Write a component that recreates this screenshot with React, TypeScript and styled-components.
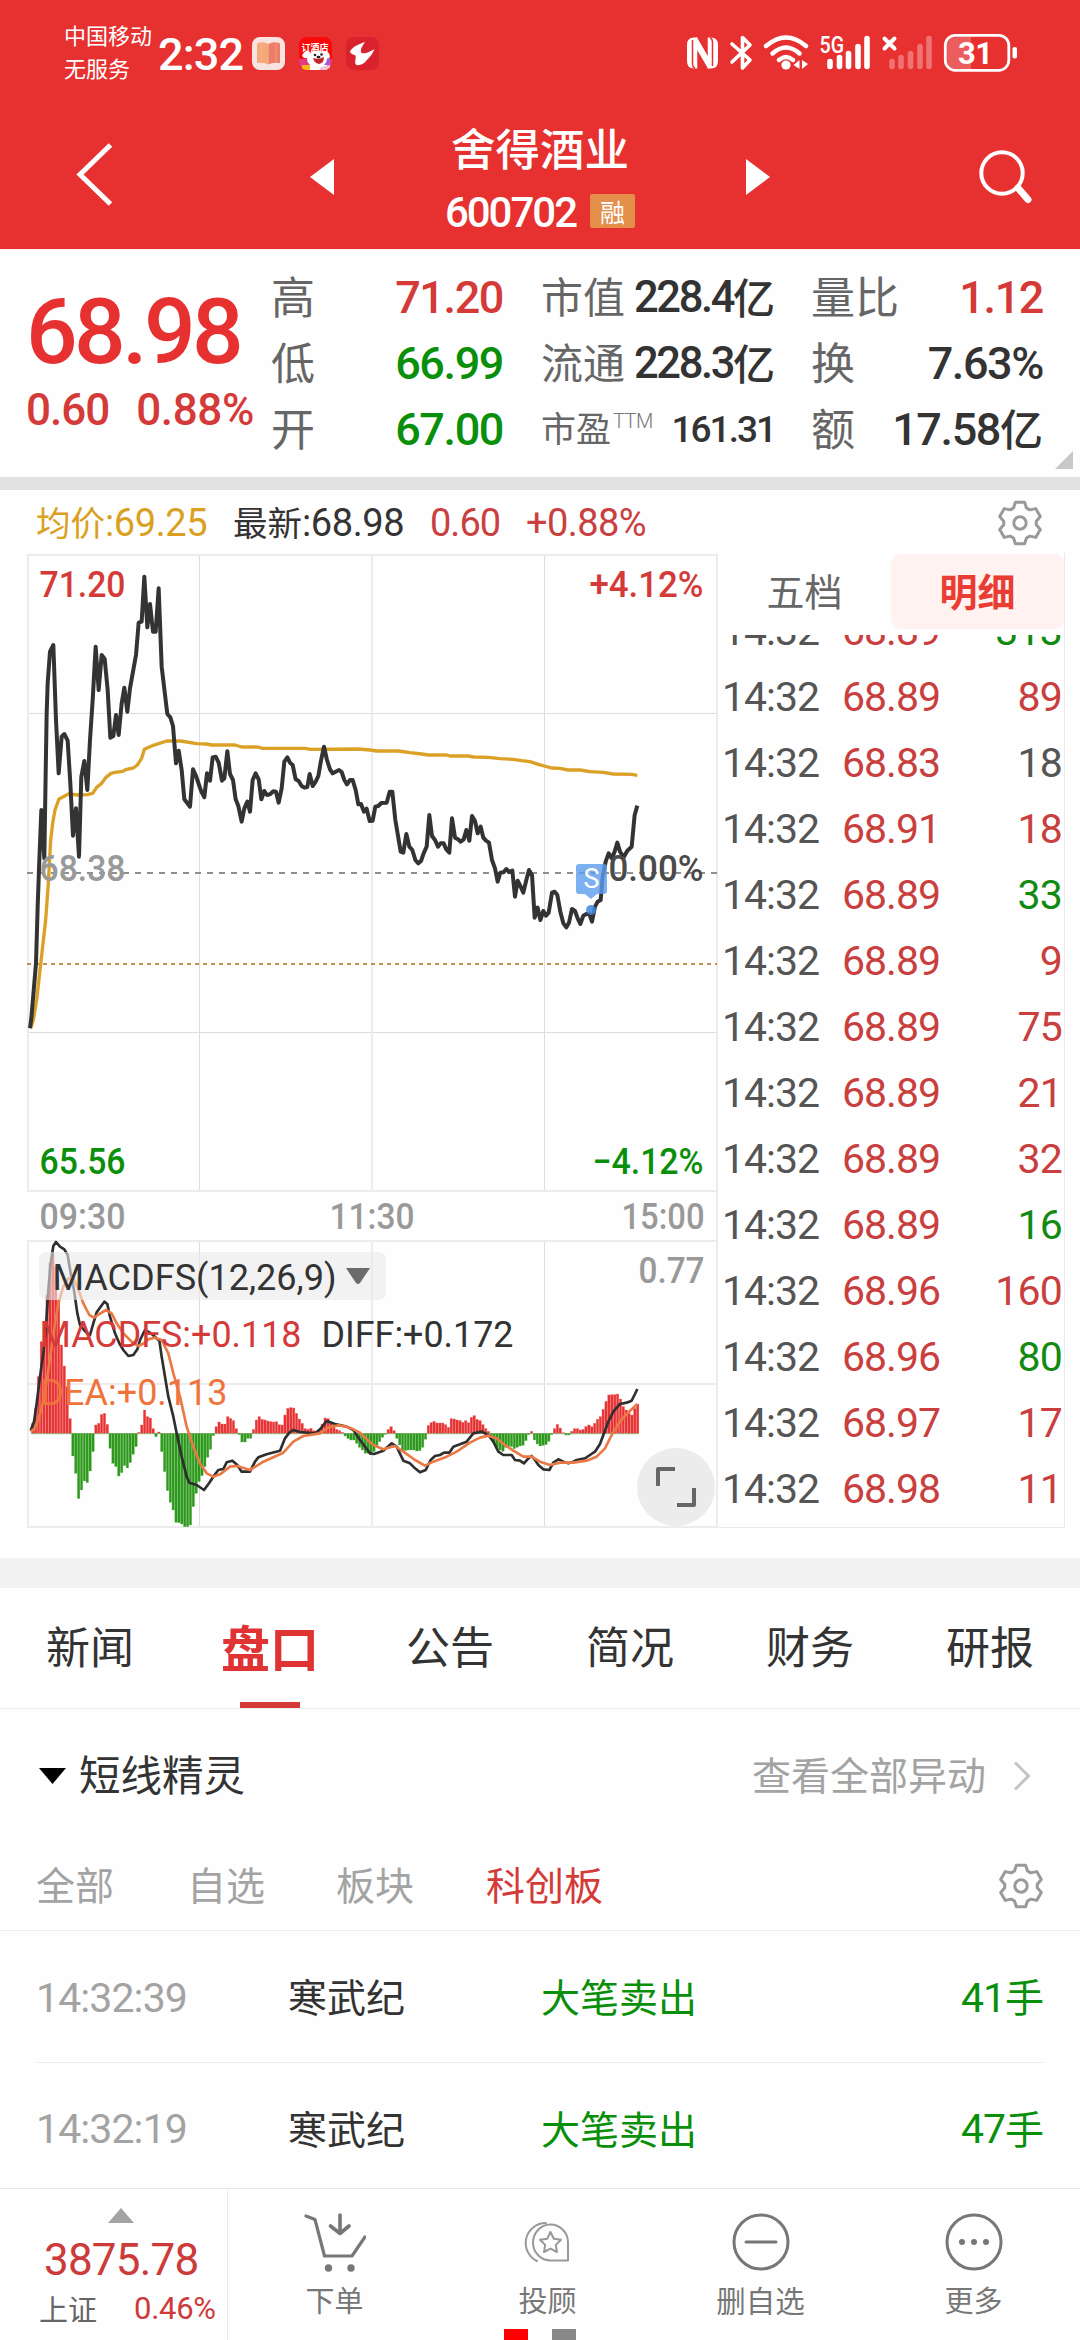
import React from "react";
import styled, { createGlobalStyle } from "styled-components";

const RED = "#d43a38";
const GREEN = "#0a8f0a";
const INK = "#333333";
const NUM_FONT = `Roboto, "Noto Sans CJK SC", sans-serif`;
const CJK_FONT = `"Noto Sans CJK SC", Roboto, sans-serif`;

const GlobalStyle = createGlobalStyle`
  * { box-sizing: border-box; }
  html, body { margin: 0; padding: 0; background: #ffffff; }
  body { width: 1080px; overflow: hidden; font-family: ${CJK_FONT}; }
  svg { display: block; }
`;

const Screen = styled.div`
  width: 1080px;
  height: 2340px;
  display: flex;
  flex-direction: column;
  background: #fefefe;
  overflow: hidden;
  position: relative;
`;

/* ---------- text primitives ---------- */

const Num = styled.span<{ $size: number; $color?: string; $weight?: number; $ls?: number }>`
  font-family: ${NUM_FONT};
  font-size: ${(p) => p.$size}px;
  line-height: 1;
  color: ${(p) => p.$color ?? INK};
  font-weight: ${(p) => p.$weight ?? 400};
  letter-spacing: ${(p) => p.$ls ?? -1}px;
  white-space: pre;
`;

const Cjk = styled.span<{ $size: number; $color?: string; $weight?: number }>`
  font-family: ${CJK_FONT};
  font-size: ${(p) => p.$size}px;
  line-height: 1;
  color: ${(p) => p.$color ?? INK};
  font-weight: ${(p) => p.$weight ?? 400};
  white-space: nowrap;
`;

/* ---------- header ---------- */

const Header = styled.header`
  height: 249px;
  flex: none;
  background: #e63130;
  display: flex;
  flex-direction: column;
`;

const StatusBar = styled.div`
  height: 106px;
  padding: 0 61px 0 64px;
  display: flex;
  align-items: center;
  justify-content: space-between;
`;

const StatusGroup = styled.div`
  display: flex;
  align-items: center;
`;

const Carrier = styled.div`
  width: 94px;
  display: flex;
  flex-direction: column;
  gap: 11px;
  padding-bottom: 5px;
`;

const Clock = styled.div`
  width: 94px;
  padding-top: 2px;
  display: flex;
`;

const AppIcons = styled.div`
  display: flex;
  gap: 14px;
`;

const NavBar = styled.div`
  height: 143px;
  display: grid;
  grid-template-columns: 300px 480px 300px;
`;

const NavSide = styled.div`
  display: flex;
  align-items: flex-start;
`;

const BackIcon = styled.svg`
  margin: 34px 0 0 72px;
`;

const SearchIcon = styled.svg`
  margin: 40px 0 0 196px;
`;

const NavCenter = styled.div`
  display: flex;
  justify-content: space-between;
  padding: 0 10px;
`;

const Arrow = styled.svg`
  margin-top: 53px;
`;

const TitleBlock = styled.div`
  display: flex;
  flex-direction: column;
  align-items: center;
  padding-top: 19px;
`;

const CodeRow = styled.div`
  display: flex;
  align-items: center;
  height: 40px;
  margin-top: 23px;
  gap: 14px;
`;

const Badge = styled.span`
  width: 45px;
  height: 34px;
  margin-top: -3px;
  border-radius: 2px;
  background: #e38e49;
  display: flex;
  align-items: center;
  justify-content: center;
`;

/* ---------- quote ---------- */

const Quote = styled.section`
  position: relative;
  height: 228px;
  flex: none;
  border-top: 1px solid #fdeeee;
  display: grid;
  grid-template-columns: 245px 270px 270px 232px;
  padding: 15px 0 0 26px;
`;

const PriceBlock = styled.div`
  display: flex;
  flex-direction: column;
`;

const BigPrice = styled.div`
  margin-top: 22px;
  height: 92px;
  display: flex;
`;

const ChangeRow = styled.div`
  display: flex;
  margin-top: 9px;
  gap: 27px;
`;

const StatColumn = styled.div<{ $width: number }>`
  width: ${(p) => p.$width}px;
  display: flex;
  flex-direction: column;
`;

const StatRow = styled.div`
  height: 65.7px;
  display: flex;
  align-items: center;
  justify-content: space-between;
`;

const StatLabel = styled.span`
  display: flex;
  align-items: center;
  padding-bottom: 5px;
`;

const StatValue = styled.span`
  display: flex;
  align-items: center;
`;

const UnitWrap = styled.span`
  display: flex;
  padding-bottom: 3px;
`;

const Sup = styled.span`
  font-family: ${NUM_FONT};
  font-size: 20px;
  line-height: 20px;
  color: #777;
  font-weight: 300;
  letter-spacing: -0.5px;
  margin: -12px 0 0 2px;
`;

const Corner = styled.svg`
  position: absolute;
  right: 7px;
  bottom: 8px;
`;

const Divider = styled.div<{ $h: number; $color: string }>`
  height: ${(p) => p.$h}px;
  flex: none;
  background: ${(p) => p.$color};
`;

/* ---------- info line ---------- */

const InfoLine = styled.div`
  height: 63px;
  flex: none;
  display: flex;
  align-items: center;
  padding: 3px 37px 0 36px;
`;

const InfoItem = styled.span<{ $width: number }>`
  width: ${(p) => p.$width}px;
  display: flex;
  align-items: center;
`;

const InfoCjk = styled.span`
  display: flex;
  padding-bottom: 4px;
`;

const Spacer = styled.span`
  flex: 1;
`;

/* ---------- chart + ticks ---------- */

const MarketArea = styled.section`
  height: 1005px;
  flex: none;
  display: flex;
`;

const ChartPane = styled.div`
  position: relative;
  width: 718px;
  height: 975px;
`;

const ExpandButton = styled.button`
  position: absolute;
  left: 637px;
  top: 895px;
  width: 78px;
  height: 78px;
  padding: 0;
  border: 0;
  border-radius: 50%;
  background: #ececec;
  display: flex;
  align-items: center;
  justify-content: center;
`;

const TickPane = styled.div`
  width: 347px;
  height: 975px;
  border-right: 1px solid #e9e9e9;
  border-bottom: 1px solid #e9e9e9;
  display: flex;
  flex-direction: column;
`;

const TickTabs = styled.div`
  height: 76px;
  flex: none;
  display: grid;
  grid-template-columns: 173px 173px;
`;

const TickTab = styled.div<{ $active?: boolean }>`
  height: 75px;
  margin-top: 1px;
  border-radius: 9px;
  background: ${(p) => (p.$active ? "#fff2f1" : "transparent")};
  display: flex;
  align-items: center;
  justify-content: center;
  padding-bottom: 3px;
`;

const TickList = styled.div`
  flex: 1;
  margin-top: 6px;
  overflow: hidden;
  display: flex;
  flex-direction: column;
  justify-content: flex-end;
  padding-bottom: 5px;
`;

const TickRow = styled.div`
  height: 66px;
  flex: none;
  padding: 0 2px 0 4px;
  display: grid;
  grid-template-columns: 120px 110px 1fr;
  align-items: center;
`;

const TickVolume = styled.span`
  text-align: right;
`;

/* ---------- tabs ---------- */

const Tabs = styled.nav`
  height: 121px;
  flex: none;
  border-bottom: 1px solid #ececec;
  display: grid;
  grid-template-columns: repeat(6, 180px);
`;

const Tab = styled.div`
  display: flex;
  flex-direction: column;
  align-items: center;
  justify-content: space-between;
`;

const TabLabel = styled.span`
  height: 114px;
  display: flex;
  align-items: center;
`;

const TabBar = styled.span`
  width: 60px;
  height: 6px;
  background: ${RED};
`;

const SectionHead = styled.div`
  height: 134px;
  flex: none;
  padding: 0 49px 0 39px;
  display: flex;
  align-items: center;
  justify-content: space-between;
`;

const HeadGroup = styled.div<{ $gap: number }>`
  display: flex;
  align-items: center;
  gap: ${(p) => p.$gap}px;
`;

const Lift = styled.span`
  display: flex;
  padding-bottom: 5px;
`;

const Filters = styled.div`
  height: 88px;
  flex: none;
  border-bottom: 1px solid #ececec;
  padding: 0 36px;
  display: flex;
  align-items: flex-start;
`;

const FilterItem = styled.span<{ $width: number }>`
  width: ${(p) => p.$width}px;
  padding-top: 21px;
  display: flex;
`;

const GearWrap = styled.span`
  padding-top: 20px;
`;

const AlertRow = styled.div<{ $h: number; $last?: boolean }>`
  height: ${(p) => p.$h}px;
  flex: none;
  margin: 0 36px;
  padding-top: ${(p) => (p.$last ? 8 : 3)}px;
  display: grid;
  grid-template-columns: 252px 253px 1fr auto;
  align-items: center;
  border-bottom: ${(p) => (p.$last ? "0" : "1px solid #ececec")};
`;

/* ---------- bottom bar ---------- */

const BottomBar = styled.footer`
  height: 153px;
  flex: none;
  border-top: 1px solid #e6e6e6;
  display: grid;
  grid-template-columns: 228px repeat(4, 213px);
  background: #fefefe;
`;

const IndexCell = styled.div`
  border-right: 1px solid #ececec;
  display: flex;
  flex-direction: column;
  padding: 19px 0 0 39px;
`;

const UpArrow = styled.svg`
  margin-left: 69px;
`;

const IndexValue = styled.div`
  margin: 15px 0 0 5px;
  height: 44px;
  display: flex;
`;

const IndexFoot = styled.div`
  margin-top: 10px;
  height: 32px;
  display: flex;
  align-items: center;
  gap: 37px;
`;

const Action = styled.div`
  display: flex;
  flex-direction: column;
  align-items: center;
  padding-top: 22px;
`;

const ActionLabel = styled.span`
  margin-top: 12px;
  display: flex;
`;

const PageDots = styled.div`
  position: absolute;
  left: 504px;
  bottom: 0;
  display: flex;
  gap: 24px;
`;

const PageDot = styled.span<{ $color: string }>`
  width: 24px;
  height: 11px;
  background: ${(p) => p.$color};
`;

/* ---------- icons ---------- */

const gearPath = (() => {
  const tooth = [
    [-6.5, -15],
    [-4.6, -20.8],
    [4.6, -20.8],
    [6.5, -15],
  ];
  const pts: string[] = [];
  for (let i = 0; i < 6; i++) {
    const a = (i * Math.PI) / 3;
    for (const [x, y] of tooth) {
      pts.push(
        `${(23 + x * Math.cos(a) - y * Math.sin(a)).toFixed(2)},${(23 + x * Math.sin(a) + y * Math.cos(a)).toFixed(2)}`
      );
    }
  }
  return `M${pts.join("L")}Z`;
})();

const Gear = () => (
  <svg width="46" height="46" viewBox="0 0 46 46" fill="none" stroke="#999" strokeWidth="3" strokeLinejoin="round">
    <path d={gearPath} />
    <circle cx="23" cy="23" r="6.2" />
  </svg>
);

const BookAppIcon = () => (
  <svg width="33" height="33" viewBox="0 0 33 33">
    <rect width="33" height="33" rx="8" fill="#f8e3e1" />
    <path d="M5 6.5Q11 4 16.500 7V27.500Q13 25 5 26Z" fill="#f5a878" />
    <path d="M28 6.500Q22 4 16.500 7V27.500Q20 25 28 26Z" fill="#ee7d68" />
    <path d="M9 5.500V25.300M24 5.500V25.300" stroke="#f9bd98" strokeWidth="1" opacity=".6" />
  </svg>
);

const HotelBadgeText = styled.text`
  font-family: ${CJK_FONT};
  font-size: 9px;
  font-weight: 700;
  fill: #fff;
`;

const HotelAppIcon = () => (
  <svg width="33" height="33" viewBox="0 0 33 33">
    <defs>
      <clipPath id="hotel">
        <rect width="33" height="33" rx="8" />
      </clipPath>
    </defs>
    <g clipPath="url(#hotel)">
      <rect width="33" height="33" fill="#fb0808" />
      <path d="M0 22H33V33H0Z" fill="#e23a86" />
      <path d="M24 22L31 20V30L25 31Z" fill="#a85bd0" />
      <ellipse cx="18" cy="22" rx="10" ry="8.500" fill="#fff" />
      <path d="M3 19Q6 12 11 15L10 20Q6 23 3 19ZM31 20Q30 13 24 15L25 20Q28 23 31 20Z" fill="#fff" />
      <path d="M8 28H28V33H8Z" fill="#fff" />
      <path d="M14 21Q20 23 25 20Q25 26 20 27Q15 26 14 21Z" fill="#c4262b" />
      <circle cx="16" cy="18" r="1.300" fill="#222" />
      <circle cx="22.500" cy="17.500" r="1.300" fill="#222" />
      <ellipse cx="19.500" cy="20" rx="2" ry="1.300" fill="#222" />
      <path d="M3 28H11V33H3Z" fill="#fdb515" />
      <path d="M22 30L31 28V33H20Z" fill="#f9c2d6" />
      <HotelBadgeText x="2.500" y="14">订酒店</HotelBadgeText>
    </g>
  </svg>
);

const BirdAppIcon = () => (
  <svg width="33" height="33" viewBox="0 0 33 33">
    <rect width="33" height="33" rx="8" fill="#d8232f" />
    <path d="M19 5C13 7 6 10 4 14.500C4 17 8 17.500 9.500 18.500C10.500 21 8 25 10 27.800C13 29 18 27 20.500 23.500C24 20 27 16 28.500 12C25 14 19 17.500 15.500 16C13.500 13 17 8 19 5Z" fill="#fff" />
  </svg>
);

const SignalCluster = styled.svg`
  margin-left: 12px;
`;

const StatusText = styled.text<{ $size: number; $weight: number }>`
  font-family: ${NUM_FONT};
  font-size: ${(p) => p.$size}px;
  font-weight: ${(p) => p.$weight};
  fill: #fff;
`;

/* The whole right-hand signal cluster shares one drawing, in screen x / y. */
const StatusIcons = () => (
  <SignalCluster width="336" height="44" viewBox="684 32 336 44" fill="none" stroke="#fff" strokeLinecap="round" strokeLinejoin="round">
    <path d="M696 38.500H695Q688 38.500 688 46V62Q688 69.500 695 69.500H697V49L709 69.500H712Q719 69.500 719 62V46Q719 38.500 712 38.500H710V59L698 38.500Z" fill="#fff" stroke="none" />
    <path d="M693.500 41V65Q693.500 68 696 69.500M713.500 67V43Q713.500 40 711 38.500" stroke="#e63130" strokeWidth="1.500" strokeLinecap="butt" />
    <path d="M697.500 38.500V69.500M709.500 38.500V69.500" stroke="#fff" strokeWidth="1.500" strokeLinecap="butt" />
    <path d="M701 49L708 60.500" stroke="#fff" strokeWidth="2.500" strokeLinecap="butt" />
    <path d="M733 45L751 61L743.500 69V38.500L751 46L733 63" strokeWidth="3.600" />
    <path d="M767 47Q787 30 807 47M773.500 54.500Q787 42.500 800.500 54.500M780 61Q787 55 794 61" strokeWidth="4.400" />
    <circle cx="787" cy="66" r="4.600" fill="#fff" stroke="none" />
    <path d="M800.500 61V70L794.500 66ZM803 61V70L809 65Z" fill="#fff" stroke="none" />
    <StatusText x="820.500" y="54" $size={23} $weight={500} stroke="none" textLength="24.500" lengthAdjust="spacingAndGlyphs">
      5G
    </StatusText>
    <path d="M831 62.500V67.500M840.500 58.500V67.500M849.500 54.500V67.500M859 47.500V67.500M868 39.500V67.500" strokeWidth="5.600" />
    <path d="M885.500 39.500L895.500 49.500M895.500 39.500L885.500 49.500" strokeWidth="4" />
    <g opacity=".32">
      <path d="M893 62.500V67.500M902 58.500V67.500M911.500 54.500V67.500M921 47.500V67.500M930 39.500V67.500" strokeWidth="5.600" />
    </g>
    <path d="M972 38H958Q948 38 948 48V60Q948 70 958 70H972Z" fill="#fff" opacity=".22" stroke="none" />
    <rect x="946.300" y="36.300" width="63.500" height="35" rx="10" strokeWidth="2.800" />
    <rect x="1013.500" y="48" width="4.500" height="11.500" rx="2" fill="#fff" stroke="none" />
    <StatusText x="959" y="65" $size={31} $weight={700} stroke="none" textLength="35" lengthAdjust="spacing">
      31
    </StatusText>
  </SignalCluster>
);

const CartIcon = () => (
  <svg width="62" height="62" viewBox="303 2211 62 62" fill="none" stroke="#777" strokeWidth="3.200" strokeLinecap="round" strokeLinejoin="round">
    <path d="M305 2216L314 2219.500L323.500 2256H351L364 2237" />
    <path d="M339 2215V2233M329.500 2226L339 2233.500L348 2226" strokeWidth="3.600" />
    <circle cx="327.500" cy="2268" r="3.700" fill="#777" stroke="none" />
    <circle cx="350" cy="2268" r="3.700" fill="#777" stroke="none" />
  </svg>
);

const AdvisorIcon = () => (
  <svg width="62" height="62" viewBox="517 2211 62 62" fill="none" stroke="#999" strokeWidth="2" strokeLinejoin="round">
    <path d="M568 2260.500V2242A17.500 18 0 1 0 550.500 2260.500Z" />
    <path d="M546 2223A20 20 0 0 0 537 2261" strokeLinecap="round" />
    <path d="M550.500 2232L553.800 2238.800L561 2239.800L555.800 2244.900L557 2252L550.500 2248.600L544 2252L545.200 2244.900L540 2239.800L547.200 2238.800Z" />
  </svg>
);

const RoundIcon = ({ children }: { children: React.ReactNode }) => (
  <svg width="62" height="62" viewBox="0 0 62 62" fill="none" stroke="#777" strokeWidth="3" strokeLinecap="round">
    <circle cx="31" cy="31" r="27" />
    {children}
  </svg>
);

/* ---------- chart data (units: thirds of a pixel) ---------- */

const pricePath =
  "90,1465 94,1435 108,1270 113,1100 118,960 124,810 133,955 137,700 140,520 143,430 150,335 160,315 168,540 176,700 185,590 193,582 203,602 211,730 219,887 228,805 237,950 244,710 253,663 262,750 270,600 278,480 287,320 296,450 305,345 314,357 323,450 331,593 340,588 348,525 356,585 365,490 373,443 382,515 390,445 399,395 408,345 416,248 425,245 433,110 442,262 450,192 459,275 467,275 476,145 485,380 502,522 511,532 519,558 528,670 536,632 545,690 553,778 570,800 579,688 587,705 604,755 613,772 621,700 630,722 638,652 647,650 656,668 666,722 673,715 682,634 690,702 699,720 707,778 715,798 725,845 733,805 742,785 750,815 758,720 767,700 776,718 784,778 793,753 801,765 810,763 820,754 828,755 836,788 845,745 853,665 862,652 870,668 878,675 887,718 896,723 905,738 913,743 922,741 929,702 938,738 947,725 955,708 963,662 972,620 981,660 990,688 998,700 1007,695 1017,690 1025,696 1033,720 1041,733 1050,720 1058,720 1067,750 1075,793 1083,792 1092,815 1100,806 1109,843 1118,842 1126,800 1135,798 1144,789 1160,788 1169,755 1177,755 1186,840 1202,935 1210,938 1219,882 1228,920 1237,930 1246,960 1255,970 1263,963 1271,940 1280,920 1288,825 1296,888 1305,900 1314,920 1322,910 1331,910 1339,928 1348,938 1356,835 1365,893 1374,898 1382,905 1391,898 1399,870 1408,902 1416,828 1425,843 1433,880 1442,860 1450,893 1458,902 1467,908 1476,960 1485,985 1493,1025 1501,998 1510,997 1519,987 1528,996 1537,992 1545,1070 1553,1022 1562,1040 1570,1058 1579,1020 1587,990 1596,1005 1604,1133 1613,1103 1621,1140 1630,1113 1638,1127 1646,1118 1656,1058 1664,1055 1672,1065 1681,1115 1690,1150 1699,1162 1707,1148 1716,1107 1725,1113 1733,1135 1741,1152 1750,1127 1759,1122 1768,1122 1776,1145 1785,1100 1793,1085 1802,1080 1808,1010 1817,965 1826,940 1835,955 1844,935 1852,908 1860,935 1871,952 1882,932 1895,920 1904,825 1912,797";

const averagePath =
  "92,1465 100,1440 110,1380 120,1290 128,1220 137,1140 145,1030 152,900 158,850 165,810 177,777 190,770 205,762 235,765 262,764 278,760 290,742 305,730 318,712 333,700 345,697 368,694 380,688 400,684 412,675 425,655 433,628 460,616 500,603 542,603 590,611 620,612 635,615 705,615 725,621 772,621 788,625 915,625 932,628 1075,627 1110,630 1130,633 1195,633 1230,638 1265,642 1285,645 1340,645 1350,648 1405,648 1420,651 1465,652 1500,656 1540,658 1565,662 1590,665 1615,673 1655,684 1680,685 1705,690 1740,690 1770,695 1810,697 1840,702 1895,703 1912,706";

const diffPath =
  "92,872 102,845 110,790 120,710 130,640 138,560 145,450 152,370 160,318 168,306 180,320 193,328 203,345 212,400 222,450 232,520 240,555 252,570 262,580 270,585 280,550 290,517 302,500 313,485 322,492 330,530 345,580 358,610 370,630 385,648 400,645 412,628 420,600 435,570 450,578 462,588 478,602 485,650 495,710 505,770 520,830 530,880 545,950 560,1010 568,1028 590,1035 612,1050 628,1028 640,1010 655,990 670,987 680,967 697,962 712,975 725,995 750,995 765,965 775,952 800,943 840,932 855,895 868,878 880,870 900,876 945,880 960,868 980,843 1005,852 1040,860 1060,870 1080,900 1095,920 1110,940 1122,942 1150,932 1175,910 1190,920 1210,962 1230,970 1245,985 1260,997 1277,990 1292,960 1305,948 1320,945 1332,938 1348,938 1360,920 1380,913 1400,905 1420,880 1445,875 1465,885 1480,905 1495,935 1510,945 1535,945 1545,960 1560,962 1572,970 1585,955 1595,948 1605,960 1615,975 1630,988 1648,990 1660,968 1675,958 1690,965 1705,970 1720,965 1730,960 1755,955 1770,945 1785,935 1800,912 1810,885 1825,845 1840,815 1860,792 1880,788 1895,782 1905,762 1912,747";

const deaPath =
  "92,875 105,865 118,830 130,780 142,710 155,620 165,550 175,490 190,440 205,415 218,412 230,435 250,490 268,525 282,533 298,522 318,510 335,520 350,550 370,580 395,605 415,618 432,610 445,598 465,593 485,600 505,640 520,700 540,770 560,860 580,920 600,970 620,1000 640,1010 660,1003 690,980 712,978 750,990 790,965 850,938 880,905 910,888 960,880 985,862 1015,856 1040,860 1060,868 1080,878 1100,897 1120,915 1150,928 1185,918 1210,935 1245,960 1275,977 1300,965 1340,950 1370,935 1410,908 1440,893 1465,887 1490,895 1510,912 1540,932 1570,950 1595,950 1620,965 1650,975 1680,968 1720,968 1760,962 1790,950 1815,925 1835,885 1860,845 1880,822 1912,792";

const macdBars = [
  0, 30, 75, 170, 275, 290, 415, 510, 540, 500, 400, 265, 202, 140, 44, -68, -120, -196, -170, -143, -148, -113, -55, 25,
  30, 57, 60, 27, -45, -90, -100, -128, -118, -97, -104, -88, -63, -40, 3, 25, 70, 50, 46, 14, -10, 4, -55, -115, -172,
  -207, -230, -267, -268, -272, -280, -280, -275, -220, -180, -145, -127, -100, -72, -48, -7, 20, 34, 28, 28, 50, 45, 38,
  14, -4, -26, -26, -15, -15, 12, 40, 50, 42, 40, 37, 35, 34, 35, 26, 25, 55, 75, 77, 76, 60, 43, 30, 14, 12, 15, 8, 6,
  12, 28, 46, 44, 30, 22, 12, 8, 3, -8, -16, -20, -20, -30, -42, -50, -60, -60, -62, -55, -40, -25, -12, -3, 12, 20, 8,
  -15, -35, -50, -52, -50, -50, -50, -53, -52, -42, -18, 24, 32, 36, 31, 31, 31, 26, 18, 44, 43, 40, 38, 33, 38, 32, 48,
  53, 42, 38, 26, 14, 6, -14, -30, -42, -50, -54, -42, -38, -40, -46, -42, -38, -36, -22, -4, 6, -20, -32, -38, -36, -34,
  -24, -4, 14, 27, 16, 2, -5, -5, 6, 14, 14, 10, 12, 20, 25, 20, 30, 42, 50, 72, 96, 115, 116, 116, 118, 103, 80, 70, 60,
  55, 75, 88,
];

const ChartText = styled.text<{ $fill: string; $weight?: number }>`
  font-family: ${NUM_FONT};
  font-size: 36.5px;
  font-weight: ${(p) => p.$weight ?? 500};
  fill: ${(p) => p.$fill};
`;

type LabelProps = { from: number; to: number; base: number; fill: string; weight?: number; children: string };

const ChartLabel = ({ from, to, base, fill, weight, children }: LabelProps) => (
  <ChartText
    x={from - 1.5}
    y={base}
    $fill={fill}
    $weight={weight}
    textLength={to - from + 3}
    lengthAdjust="spacingAndGlyphs"
  >
    {children}
  </ChartText>
);

const MarkerText = styled.text`
  font-family: ${NUM_FONT};
  font-size: 27px;
  fill: #fff;
`;

const Chart = () => (
  <svg width="718" height="975" viewBox="0 553 718 975">
    <g fill="none" stroke="#ddd" strokeWidth="1">
      <path d="M28 713.500H717M28 1032.500H717M199.500 555V1191M544.500 555V1191M199.500 1241V1527M544.500 1241V1527" />
    </g>
    <g fill="none" stroke="#ececec" strokeWidth="2">
      <path d="M27 555H717V1191H28V555M372 555V1191M28 1241H717V1527H28V1240M372 1241V1527M28 1384H717M717 553V1528" />
    </g>
    <path d="M27 873H717" stroke="#8f8f8f" strokeWidth="2" strokeDasharray="6 6" fill="none" />
    <path d="M27 964H717" stroke="#bf9050" strokeWidth="2" strokeDasharray="4 4" fill="none" />

    <g transform="translate(0 540) scale(.33333)" fill="none" strokeLinejoin="round">
      <polyline points={averagePath} stroke="#dba126" strokeWidth="10" />
      <polyline points={pricePath} stroke="#333" strokeWidth="12" />
    </g>

    <g transform="translate(0 1140) scale(.33333)">
      {macdBars.map((v, i) => (
        <rect
          key={i}
          x={86 + i * 8.6}
          width="7.500"
          y={v > 0 ? 880 - v : 880}
          height={Math.abs(v)}
          fill={v > 0 ? "#e63232" : "#2c991c"}
          stroke={v > 0 ? "#f07070" : "#6cbb5f"}
          strokeWidth="1"
        />
      ))}
      <path d="M92 881H1916" stroke="#6f9a4a" strokeWidth="2" />
      <g fill="none" strokeLinejoin="round">
        <polyline points={diffPath} stroke="#2f2f2f" strokeWidth="8" />
        <polyline points={deaPath} stroke="#ea7a45" strokeWidth="8" />
      </g>
    </g>

    <rect x="39" y="1252" width="347" height="48" rx="8" fill="#e9e9e9" opacity=".6" />
    <path d="M346 1268H370L360 1283Q358 1285 356 1283Z" fill="#6b6b6b" />
    <ChartLabel from={54} to={335} base={1290} fill={INK} weight={400}>MACDFS(12,26,9)</ChartLabel>
    <ChartLabel from={41} to={300} base={1347} fill={RED} weight={400}>MACDFS:+0.118</ChartLabel>
    <ChartLabel from={323} to={512} base={1347} fill={INK} weight={400}>DIFF:+0.172</ChartLabel>
    <ChartLabel from={42} to={226} base={1405} fill="#f0733c" weight={400}>DEA:+0.113</ChartLabel>
    <ChartLabel from={640} to={703} base={1283} fill="#999">0.77</ChartLabel>

    <ChartLabel from={41} to={124} base={597} fill={RED}>71.20</ChartLabel>
    <ChartLabel from={591} to={702} base={597} fill={RED}>+4.12%</ChartLabel>
    <ChartLabel from={41} to={124} base={881} fill="#999">68.38</ChartLabel>
    <ChartLabel from={41} to={124} base={1174} fill={GREEN}>65.56</ChartLabel>
    <ChartLabel from={594} to={702} base={1174} fill={GREEN}>−4.12%</ChartLabel>
    <ChartLabel from={41} to={124} base={1229} fill="#999">09:30</ChartLabel>
    <ChartLabel from={331} to={413} base={1229} fill="#999">11:30</ChartLabel>
    <ChartLabel from={623} to={703} base={1229} fill="#999">15:00</ChartLabel>

    <ChartLabel from={610} to={702} base={881} fill="#4a4a4a">0.00%</ChartLabel>
    <g fill="#5b9cec">
      <path
        opacity=".8"
        d="M579 864H604Q607 864 607 867V891Q607 894 604 894H597L591 899L585 894H579Q576 894 576 891V867Q576 864 579 864Z"
      />
      <circle cx="591" cy="910" r="5" fill="#3f86e0" opacity=".85" />
    </g>
    <MarkerText x="583.500" y="888" textLength="16" lengthAdjust="spacingAndGlyphs">S</MarkerText>
  </svg>
);

/* ---------- content ---------- */

type StatData = { label: string; value: string; color?: string; unit?: string };

const rangeStats: StatData[] = [
  { label: "高", value: "71.20", color: RED },
  { label: "低", value: "66.99", color: GREEN },
  { label: "开", value: "67.00", color: GREEN },
];

const turnoverStats: StatData[] = [
  { label: "量比", value: "1.12", color: RED },
  { label: "换", value: "7.63%" },
  { label: "额", value: "17.58", unit: "亿" },
];

const Stat = ({ label, value, color, unit }: StatData) => (
  <StatRow>
    <StatLabel>
      <Cjk $size={44} $color="#666">{label}</Cjk>
    </StatLabel>
    <StatValue>
      <Num $size={45} $weight={500} $color={color} $ls={-1.4}>{value}</Num>
      {unit && (
        <UnitWrap>
          <Cjk $size={43} $weight={500}>{unit}</Cjk>
        </UnitWrap>
      )}
    </StatValue>
  </StatRow>
);

const CapStat = ({ label, value }: { label: string; value: string }) => (
  <StatRow>
    <StatLabel>
      <Cjk $size={42} $color="#666">{label}</Cjk>
    </StatLabel>
    <StatValue>
      <Num $size={43.5} $weight={500} $ls={-2.4}>{value}</Num>
      <UnitWrap>
        <Cjk $size={42} $weight={500}>亿</Cjk>
      </UnitWrap>
    </StatValue>
  </StatRow>
);

const ticks: [string, string, boolean][] = [
  ["68.89", "313", false],
  ["68.89", "89", true],
  ["68.83", "18", true],
  ["68.91", "18", true],
  ["68.89", "33", false],
  ["68.89", "9", true],
  ["68.89", "75", true],
  ["68.89", "21", true],
  ["68.89", "32", true],
  ["68.89", "16", false],
  ["68.96", "160", true],
  ["68.96", "80", false],
  ["68.97", "17", true],
  ["68.98", "11", true],
];

const tickColor = (i: number, up: boolean) => (i === 2 ? "#555" : up ? "#c93f3d" : "#128a12");

const tabs = ["新闻", "盘口", "公告", "简况", "财务", "研报"];

const filters: [string, number][] = [
  ["全部", 151],
  ["自选", 149],
  ["板块", 150],
  ["科创板", 200],
];

const alerts = [
  { time: "14:32:39", lots: "41", h: 132 },
  { time: "14:32:19", lots: "47", h: 125 },
];

export default function App() {
  return (
    <Screen>
      <GlobalStyle />
      <Header>
        <StatusBar>
          <StatusGroup>
            <Carrier>
              <Cjk $size={22} $color="#fff">中国移动</Cjk>
              <Cjk $size={22} $color="#fff">无服务</Cjk>
            </Carrier>
            <Clock>
              <Num $size={45} $weight={500} $color="#fff" $ls={-0.8}>2:32</Num>
            </Clock>
            <AppIcons>
              <BookAppIcon />
              <HotelAppIcon />
              <BirdAppIcon />
            </AppIcons>
          </StatusGroup>
          <StatusIcons />
        </StatusBar>
        <NavBar>
          <NavSide>
            <BackIcon width="46" height="70" viewBox="0 0 46 70" fill="none" stroke="#fff" strokeWidth="5">
              <path d="M38.500 5L8 34.500L38.500 64" />
            </BackIcon>
          </NavSide>
          <NavCenter>
            <Arrow width="24" height="36" viewBox="0 0 24 36" fill="#fff">
              <path d="M24 0V36L0 18Z" />
            </Arrow>
            <TitleBlock>
              <Cjk $size={44.5} $weight={500} $color="#fff">舍得酒业</Cjk>
              <CodeRow>
                <Num $size={42} $weight={500} $color="#fff" $ls={-2}>600702</Num>
                <Badge>
                  <Cjk $size={25} $color="#fff">融</Cjk>
                </Badge>
              </CodeRow>
            </TitleBlock>
            <Arrow width="24" height="36" viewBox="0 0 24 36" fill="#fff">
              <path d="M0 0V36L24 18Z" />
            </Arrow>
          </NavCenter>
          <NavSide>
            <SearchIcon width="60" height="60" viewBox="976 146 60 60" fill="none" stroke="#fff" strokeLinecap="round">
              <circle cx="1002" cy="173" r="20.700" strokeWidth="4" />
              <path d="M1018 188L1028 199.500" strokeWidth="7" />
            </SearchIcon>
          </NavSide>
        </NavBar>
      </Header>

      <Quote>
        <PriceBlock>
          <BigPrice>
            <Num $size={91} $weight={500} $color="#e63130" $ls={-3.6}>68.98</Num>
          </BigPrice>
          <ChangeRow>
            <Num $size={44} $weight={500} $color={RED} $ls={-1}>0.60</Num>
            <Num $size={44} $weight={500} $color={RED} $ls={-0.4}>0.88%</Num>
          </ChangeRow>
        </PriceBlock>
        <StatColumn $width={232}>
          {rangeStats.map((s) => (
            <Stat key={s.label} {...s} />
          ))}
        </StatColumn>
        <StatColumn $width={234}>
          <CapStat label="市值" value="228.4" />
          <CapStat label="流通" value="228.3" />
          <StatRow>
            <StatLabel>
              <Cjk $size={35} $color="#666">市盈</Cjk>
              <Sup>TTM</Sup>
            </StatLabel>
            <Num $size={37} $weight={500} $ls={-2}>161.31</Num>
          </StatRow>
        </StatColumn>
        <StatColumn $width={232}>
          {turnoverStats.map((s) => (
            <Stat key={s.label} {...s} />
          ))}
        </StatColumn>
        <Corner width="18" height="18" viewBox="0 0 18 18">
          <path d="M18 0V18H0Z" fill="#c9c9c9" />
        </Corner>
      </Quote>
      <Divider $h={13} $color="#e1e1e1" />

      <InfoLine>
        <InfoItem $width={197}>
          <InfoCjk>
            <Cjk $size={34.5} $color="#d9a021">均价</Cjk>
          </InfoCjk>
          <Num $size={38} $color="#d9a021" $ls={-0.4}>:69.25</Num>
        </InfoItem>
        <InfoItem $width={197}>
          <InfoCjk>
            <Cjk $size={34.5}>最新</Cjk>
          </InfoCjk>
          <Num $size={38} $ls={-0.4}>:68.98</Num>
        </InfoItem>
        <InfoItem $width={96}>
          <Num $size={38} $color="#c94040" $ls={-1}>0.60</Num>
        </InfoItem>
        <Num $size={38} $color="#c94040" $ls={-0.6}>+0.88%</Num>
        <Spacer />
        <Gear />
      </InfoLine>

      <MarketArea>
        <ChartPane>
          <Chart />
          <ExpandButton aria-label="expand">
            <svg width="40" height="40" viewBox="656 1467 40 40" fill="none" stroke="#666" strokeWidth="4" strokeLinejoin="round">
              <path d="M658 1486V1469H675M677 1505H694V1488" />
            </svg>
          </ExpandButton>
        </ChartPane>
        <TickPane>
          <TickTabs>
            <TickTab>
              <Cjk $size={38} $color="#666">五档</Cjk>
            </TickTab>
            <TickTab $active>
              <Cjk $size={38} $weight={700} $color="#e93c33">明细</Cjk>
            </TickTab>
          </TickTabs>
          <TickList>
            {ticks.map(([price, volume, up], i) => (
              <TickRow key={i}>
                <Num $size={41} $color="#555">14:32</Num>
                <Num $size={41} $color="#c93f3d">{price}</Num>
                <TickVolume>
                  <Num $size={41} $color={tickColor(i, up)} $ls={-0.8}>{volume}</Num>
                </TickVolume>
              </TickRow>
            ))}
          </TickList>
        </TickPane>
      </MarketArea>
      <Divider $h={30} $color="#f2f2f2" />

      <Tabs>
        {tabs.map((t) => (
          <Tab key={t}>
            <TabLabel>
              <Cjk $size={t === "盘口" ? 49 : 44} $weight={t === "盘口" ? 700 : 400} $color={t === "盘口" ? "#e03434" : INK}>
                {t}
              </Cjk>
            </TabLabel>
            {t === "盘口" && <TabBar />}
          </Tab>
        ))}
      </Tabs>

      <SectionHead>
        <HeadGroup $gap={13}>
          <svg width="27" height="16" viewBox="0 0 27 16">
            <path d="M0 0H27L13.500 16Z" fill="#000" />
          </svg>
          <Lift>
            <Cjk $size={41.5}>短线精灵</Cjk>
          </Lift>
        </HeadGroup>
        <HeadGroup $gap={27}>
          <Lift>
            <Cjk $size={39} $color="#a3a3a3">查看全部异动</Cjk>
          </Lift>
          <svg width="18" height="30" viewBox="0 0 18 30" fill="none" stroke="#c4c4c4" strokeWidth="3">
            <path d="M2 1.500L15.500 15L2 28.500" />
          </svg>
        </HeadGroup>
      </SectionHead>

      <Filters>
        {filters.map(([name, w]) => (
          <FilterItem key={name} $width={w}>
            <Cjk $size={39} $color={name === "科创板" ? RED : "#a3a3a3"}>{name}</Cjk>
          </FilterItem>
        ))}
        <Spacer />
        <GearWrap>
          <Gear />
        </GearWrap>
      </Filters>

      {alerts.map((a, i) => (
        <AlertRow key={a.time} $h={a.h} $last={i === alerts.length - 1}>
          <Num $size={41} $color="#a3a3a3" $ls={-0.9}>{a.time}</Num>
          <Lift>
            <Cjk $size={39}>寒武纪</Cjk>
          </Lift>
          <Lift>
            <Cjk $size={39} $color={GREEN}>大笔卖出</Cjk>
          </Lift>
          <StatValue>
            <Num $size={41} $color={GREEN}>{a.lots}</Num>
            <Lift>
              <Cjk $size={39} $color={GREEN}>手</Cjk>
            </Lift>
          </StatValue>
        </AlertRow>
      ))}

      <BottomBar>
        <IndexCell>
          <UpArrow width="26" height="15" viewBox="0 0 26 15">
            <path d="M0 15H26L13 0Z" fill="#a3a3a3" />
          </UpArrow>
          <IndexValue>
            <Num $size={44} $color="#cc3b39" $ls={-0.8}>3875.78</Num>
          </IndexValue>
          <IndexFoot>
            <Cjk $size={29} $color="#666">上证</Cjk>
            <Num $size={31} $color="#cc3b39" $ls={-0.3}>0.46%</Num>
          </IndexFoot>
        </IndexCell>
        <Action>
          <CartIcon />
          <ActionLabel>
            <Cjk $size={29} $color="#777">下单</Cjk>
          </ActionLabel>
        </Action>
        <Action>
          <AdvisorIcon />
          <ActionLabel>
            <Cjk $size={29} $color="#777">投顾</Cjk>
          </ActionLabel>
        </Action>
        <Action>
          <RoundIcon>
            <path d="M16 31H46" />
          </RoundIcon>
          <ActionLabel>
            <Cjk $size={29.5} $color="#777">删自选</Cjk>
          </ActionLabel>
        </Action>
        <Action>
          <RoundIcon>
            <path d="M19 31H19.010M31 31H31.010M43 31H43.010" strokeWidth="6" />
          </RoundIcon>
          <ActionLabel>
            <Cjk $size={29} $color="#777">更多</Cjk>
          </ActionLabel>
        </Action>
      </BottomBar>
      <PageDots>
        <PageDot $color="#ff0000" />
        <PageDot $color="#888888" />
      </PageDots>
    </Screen>
  );
}
